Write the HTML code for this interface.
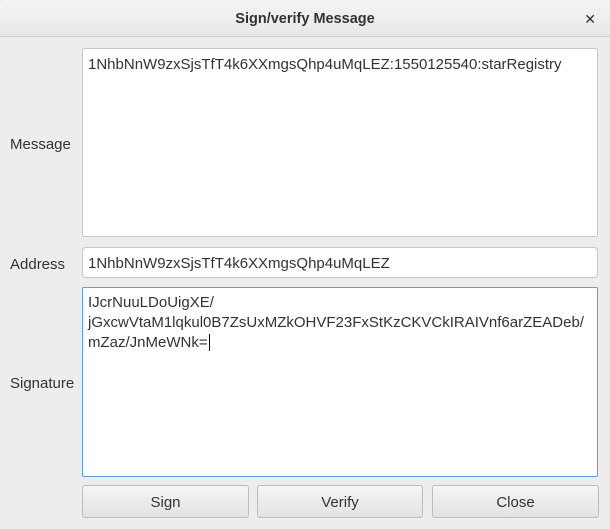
<!DOCTYPE html>
<html><head><style>
*{margin:0;padding:0;box-sizing:border-box}
body{width:610px;height:529px;background:#ededed;font-family:"Liberation Sans","DejaVu Sans",sans-serif;font-size:15px;color:#2e3436;position:relative;overflow:hidden}
.title{position:absolute;left:0;top:0;width:610px;height:37px;background:linear-gradient(#f4f4f4,#e8e8e8);border-bottom:1px solid #cfcfcf;border-radius:6px 6px 0 0;text-align:center;line-height:38px;font-weight:bold;font-size:14.5px;color:#2e3436}
.x{position:absolute;right:14px;top:0;font-size:14px;font-weight:bold}
.lbl{position:absolute;left:10px;font-size:15px}
.box{position:absolute;left:82px;width:516px;background:#fff;border:1px solid #c6c6c6;border-radius:2px;padding:6px 5px;line-height:20px}
.btn{position:absolute;top:485px;height:33px;border:1px solid #bdbdbd;border-radius:3px;background:linear-gradient(#f6f6f6,#e2e2e2);text-align:center;line-height:33px;font-size:15px}
</style></head><body>
<div class="title">Sign/verify Message<span class="x">✕</span></div>
<div class="lbl" style="top:136px">Message</div>
<div class="box" style="top:48px;height:189px">1NhbNnW9zxSjsTfT4k6XXmgsQhp4uMqLEZ:1550125540:starRegistry</div>
<div class="lbl" style="top:256px">Address</div>
<div class="box" style="top:247px;height:31px;border-radius:4px;padding-top:6px">1NhbNnW9zxSjsTfT4k6XXmgsQhp4uMqLEZ</div>
<div class="lbl" style="top:375px">Signature</div>
<div class="box" style="top:287px;height:190px;border-color:#5a9de0;padding-top:5px">IJcrNuuLDoUigXE/<br>jGxcwVtaM1lqkul0B7ZsUxMZkOHVF23FxStKzCKVCkIRAIVnf6arZEADeb/<br>mZaz/JnMeWNk=<span style="border-left:1px solid #000;margin-left:1px"></span></div>
<div class="btn" style="left:82px;width:167px">Sign</div>
<div class="btn" style="left:257px;width:166px">Verify</div>
<div class="btn" style="left:432px;width:167px">Close</div>
</body></html>
